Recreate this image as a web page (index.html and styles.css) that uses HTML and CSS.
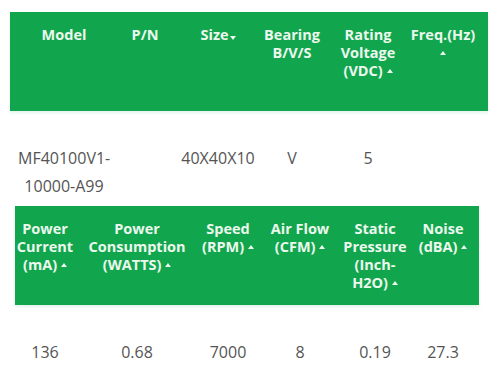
FILE: index.html
```html
<!DOCTYPE html>
<html lang="en">
<head>
<meta charset="utf-8">
<title>Fan specification</title>
<link rel="stylesheet" href="styles.css">
</head>
<body>
<main class="spec">
  <div class="head grid-a">
    <div class="cell">Model</div>
    <div class="cell">P/N</div>
    <div class="cell">Size<span class="caret down"></span></div>
    <div class="cell">Bearing<br>B/V/S</div>
    <div class="cell">Rating<br>Voltage<br>(VDC) <span class="caret up"></span></div>
    <div class="cell">Freq.(Hz)<br><span class="caret up"></span></div>
  </div>
  <div class="data grid-a">
    <div class="cell">MF40100V1-<br>10000-A99</div>
    <div class="cell"></div>
    <div class="cell">40X40X10</div>
    <div class="cell">V</div>
    <div class="cell">5</div>
    <div class="cell"></div>
  </div>
  <div class="head grid-b">
    <div class="cell">Power<br>Current<br>(mA) <span class="caret up"></span></div>
    <div class="cell">Power<br>Consumption<br>(WATTS) <span class="caret up"></span></div>
    <div class="cell">Speed<br>(RPM) <span class="caret up"></span></div>
    <div class="cell">Air Flow<br>(CFM) <span class="caret up"></span></div>
    <div class="cell">Static<br>Pressure<br>(Inch-<br>H2O) <span class="caret up"></span></div>
    <div class="cell">Noise<br>(dBA) <span class="caret up"></span></div>
  </div>
  <div class="data grid-b">
    <div class="cell">136</div>
    <div class="cell">0.68</div>
    <div class="cell">7000</div>
    <div class="cell">8</div>
    <div class="cell">0.19</div>
    <div class="cell">27.3</div>
  </div>
</main>
</body>
</html>
```
FILE: styles.css
```css
html, body {
  margin: 0;
  padding: 0;
  background: #ffffff;
}

.spec {
  padding-top: 12px;
  font-family: "Open Sans", "Noto Sans", sans-serif;
}

.grid-a {
  display: grid;
  grid-template-columns: 92px 70px 76px 72px 80px 70px;
  width: 478px;
  margin-left: 10px;
  padding: 0 10px 0 8px;
  box-sizing: border-box;
}

.grid-b {
  display: grid;
  grid-template-columns: 60px 124px 58px 86px 64px 72px;
  width: 464px;
  margin-left: 15px;
}

.cell {
  text-align: center;
  white-space: nowrap;
}

.head {
  height: 99px;
  box-sizing: border-box;
  padding-top: 14px;
  background: #11a64d;
  color: #ecf8ee;
  font-weight: 700;
  font-size: 14.5px;
  line-height: 18px;
  box-shadow: 0 2px 3px rgba(0, 160, 110, 0.12);
}

.data {
  height: 95px;
  box-sizing: border-box;
  padding-top: 33px;
  color: #555555;
  font-size: 16px;
  line-height: 28px;
}

.caret {
  display: inline-block;
  width: 0;
  height: 0;
  border-left: 3.5px solid transparent;
  border-right: 3.5px solid transparent;
}

.caret.up {
  border-bottom: 4px solid #ecf8ee;
  vertical-align: 3px;
}

.caret.down {
  border-top: 4px solid #ecf8ee;
  margin-left: 1px;
  vertical-align: 0;
}
```
